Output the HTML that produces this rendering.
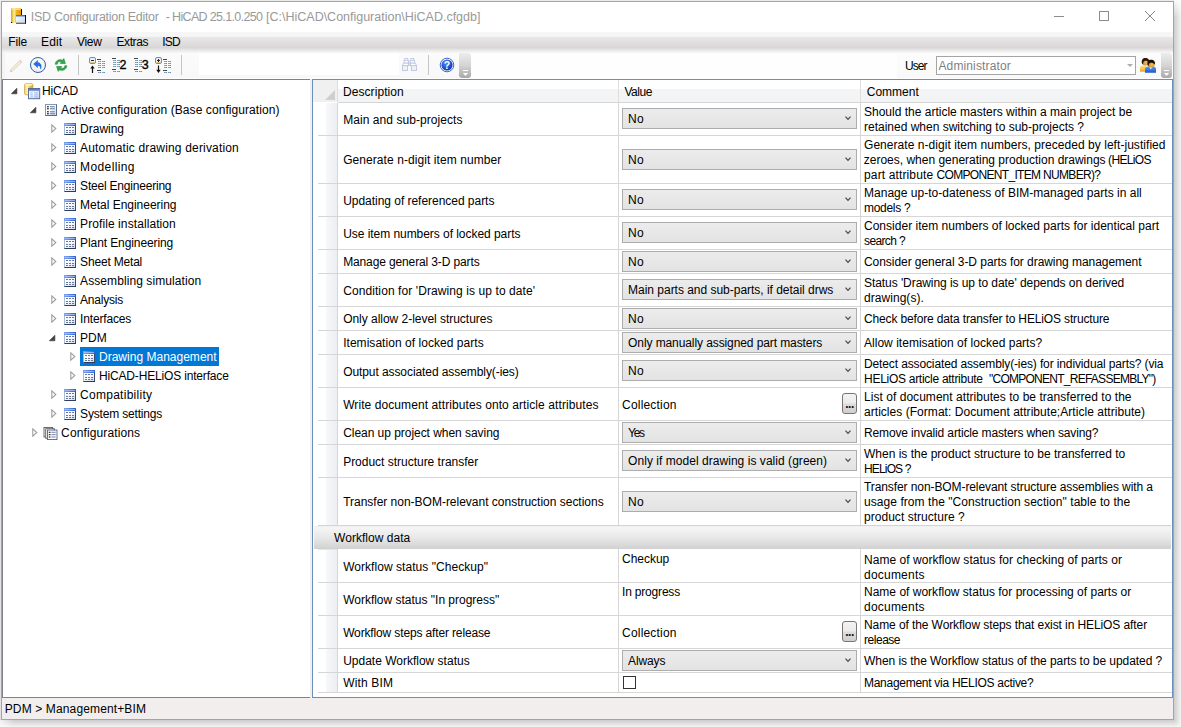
<!DOCTYPE html>
<html lang="en"><head><meta charset="utf-8"><title>ISD Configuration Editor</title>
<style>
*{box-sizing:border-box;margin:0;padding:0}
html,body{width:1181px;height:727px;overflow:hidden;background:#fff}
body{font:12px/15px "Liberation Sans",sans-serif;color:#000;position:relative}
.a,.t,svg{position:absolute}
.t{white-space:pre;line-height:15px;height:15px}
#win{left:1px;top:1px;width:1173px;height:719px;border:1px solid #a4a4a4;background:#f1f0ef}
.hl{position:absolute;height:1px;background:#d6d6d6}
.vl{position:absolute;width:1px;background:#d6d6d6}
.cb{position:absolute;left:622px;width:235px;height:21px;border:1px solid #adadad;background:linear-gradient(#ececec,#e3e3e3)}
.btn{position:absolute;left:842px;width:15px;height:21px;border:1px solid #767676;border-radius:3px;background:linear-gradient(#f3f3f3 0,#ebebeb 48%,#dddddd 52%,#cfcfcf 100%)}
</style></head><body>
<div class="a" style="left:0px;top:0px;width:1181px;height:1px;background:#ebebeb"></div>
<div class="a" style="left:0px;top:0px;width:1px;height:727px;background:linear-gradient(#ececec 0,#e4e4e4 30px,#e2e2e2 100%)"></div>
<div class="a" style="left:1174px;top:0px;width:7px;height:720px;background:linear-gradient(to right,#cdcdcd,#f3f3f3)"></div>
<div class="a" style="left:1174px;top:0px;width:7px;height:18px;background:linear-gradient(rgba(255,255,255,.85),rgba(255,255,255,0))"></div>
<div class="a" style="left:0px;top:720px;width:1174px;height:7px;background:linear-gradient(#cdcdcd,#f3f3f3)"></div>
<div class="a" style="left:0px;top:720px;width:14px;height:7px;background:linear-gradient(to right,rgba(255,255,255,.7),rgba(255,255,255,0))"></div>
<div class="a" style="left:1174px;top:720px;width:7px;height:7px;background:radial-gradient(circle at 0 0,#cdcdcd 0,#dedede 3px,#f3f3f3 7px)"></div>
<div id="win" class="a"></div>
<svg style="left:0;top:0" width="0" height="0"><defs><linearGradient id="thd" x1="0" x2="1" y1="0" y2="0"><stop offset="0" stop-color="#7ea4f0"/><stop offset="1" stop-color="#2a5fd8"/></linearGradient><linearGradient id="gy2" x1="0" x2="1" y1="0" y2="0"><stop offset="0" stop-color="#f2d468"/><stop offset=".35" stop-color="#fff2b0"/><stop offset=".7" stop-color="#efb830"/><stop offset="1" stop-color="#e6a21c"/></linearGradient><linearGradient id="thd2" x1="0" x2="0" y1="0" y2="1"><stop offset="0" stop-color="#3f6fd8"/><stop offset="1" stop-color="#9ab4ee"/></linearGradient><linearGradient id="tbg" x1="0" x2="1" y1="0" y2="1"><stop offset="0" stop-color="#fff"/><stop offset=".5" stop-color="#f4f7fd"/><stop offset="1" stop-color="#c4d1ee"/></linearGradient></defs></svg>
<div class="a" style="left:2px;top:2px;width:1171px;height:30px;background:#fff"></div>
<svg style="left:11px;top:8px" width="16" height="16" viewBox="0 0 16 16"><defs><linearGradient id="gy" x1="0" x2="1" y1="0" y2="0"><stop offset="0" stop-color="#e2a000"/><stop offset=".32" stop-color="#fdf0a0"/><stop offset=".55" stop-color="#efb41c"/><stop offset="1" stop-color="#e59c00"/></linearGradient>
<linearGradient id="gb" x1="0" x2="0" y1="0" y2="1"><stop offset="0" stop-color="#2a62d8"/><stop offset="1" stop-color="#5c8dea"/></linearGradient>
<linearGradient id="gw" x1="0" x2="1" y1="0" y2="1"><stop offset="0" stop-color="#fff"/><stop offset="1" stop-color="#c9d6f2"/></linearGradient></defs>
<rect x="0" y="0" width="10" height="14.8" fill="url(#gy)"/><rect x="0.3" y="0.3" width="9.4" height="1.5" fill="#f7e6a6"/>
<rect x="10" y="1" width="1" height="6" fill="#111"/><rect x="0" y="14" width="1.2" height="1" fill="#111"/>
<rect x="5" y="7" width="9" height="7.8" fill="url(#gw)"/><rect x="5" y="7" width="9" height="1.6" fill="url(#gb)"/>
<rect x="14" y="7" width="1" height="8.6" fill="#0a0a0a"/><rect x="5" y="14.8" width="10" height=".9" fill="#1c2a4a"/></svg>
<div class="t" style="left:30.85px;top:10px;letter-spacing:-0.291px;font-size:12.5px;color:#999;">ISD Configuration Editor</div>
<div class="t" style="left:165.69px;top:10px;letter-spacing:-0.653px;font-size:12.5px;color:#999;">- HiCAD 25.1.0.250</div>
<div class="t" style="left:266.11px;top:10px;letter-spacing:-0.011px;font-size:12.5px;color:#999;">[C:\HiCAD\Configuration\HiCAD.cfgdb]</div>
<div class="a" style="left:1054px;top:16px;width:10px;height:1px;background:#8c8c8c"></div>
<div class="a" style="left:1099px;top:11px;width:10px;height:10px;border:1px solid #8c8c8c"></div>
<svg style="left:1144px;top:10px" width="12" height="12" viewBox="0 0 12 12"><path d="M1 1 L11 11 M11 1 L1 11" stroke="#858585" stroke-width="1" fill="none"/></svg>
<div class="a" style="left:2px;top:32px;width:1171px;height:21px;background:linear-gradient(#f6f6f6 0,#f6f6f6 21%,#e9e8e8 24%,#d9d7d6 75%,#ececec 90%,#f8f8f8 100%)"></div>
<div class="t" style="left:8.32px;top:35px;letter-spacing:-0.175px;">File</div>
<div class="t" style="left:41.02px;top:35px;letter-spacing:0.128px;">Edit</div>
<div class="t" style="left:76.95px;top:35px;letter-spacing:-0.258px;">View</div>
<div class="t" style="left:116.52px;top:35px;letter-spacing:-0.420px;">Extras</div>
<div class="t" style="left:162.14px;top:35px;letter-spacing:-0.792px;">ISD</div>
<div class="a" style="left:2px;top:53px;width:1171px;height:26px;background:linear-gradient(to right,#f3f3f3 0,#f6f6f6 4px,#fefefe 5px)"></div>
<div class="a" style="left:5px;top:53px;width:456px;height:25px;background:linear-gradient(#fcfbfc,#f9f8f9);border-radius:3px 0 3px 0"></div>
<div class="a" style="left:459px;top:53px;width:12px;height:25px;background:linear-gradient(#ececec,#d4d4d4 50%,#a8a8a8);border-radius:0 3px 3px 3px"></div>
<div class="a" style="left:199px;top:53px;width:200px;height:22px;background:#fff"></div>
<div class="a" style="left:78px;top:55px;width:1px;height:20px;background:#c5c5c5"></div>
<div class="a" style="left:181px;top:55px;width:1px;height:20px;background:#c5c5c5"></div>
<div class="a" style="left:428px;top:55px;width:1px;height:20px;background:#c5c5c5"></div>
<svg style="left:8px;top:58px" width="16" height="16" viewBox="0 0 16 16"><path d="M2.2 13.8 L3.2 11 L12 2.2 L13.8 4 L5 12.8 Z" fill="#f3ead6" stroke="#d9d2c4" stroke-width=".8"/><path d="M11.3 2.9 L12.4 1.8 L14.2 3.6 L13.1 4.7Z" fill="#f4c9c9"/><path d="M2.2 13.8 L2.7 12.3 L3.7 13.3Z" fill="#bbb"/></svg>
<svg style="left:29px;top:56px" width="18" height="18" viewBox="0 0 18 18"><defs><radialGradient id="gu" cx=".5" cy=".3" r=".8"><stop offset="0" stop-color="#fff"/><stop offset="1" stop-color="#e9e9e4"/></radialGradient></defs><circle cx="9" cy="9" r="7.5" fill="url(#gu)" stroke="#335ea8" stroke-width="1"/><path d="M4.6 8 L8.6 4.4 L8.6 6.6 C11.8 6.8 13 9.6 11.6 13 C11.8 10.6 10.8 9.4 8.6 9.4 L8.6 11.6 Z" fill="#1f6fe8" stroke="#1a55c0" stroke-width=".5"/></svg>
<svg style="left:53px;top:57px" width="16" height="16" viewBox="0 0 16 16"><path d="M2.2 7.2 C2.4 3.6 6.2 1.6 9.6 3.2 L10.8 1.6 L12.4 6.6 L7.2 6.4 L8.4 4.8 C6.4 4 4.4 5 4.2 7.2 Z" fill="#2fa84a" stroke="#1f8a3a" stroke-width=".6"/><path d="M13.8 8.8 C13.6 12.4 9.8 14.4 6.4 12.8 L5.2 14.4 L3.6 9.4 L8.8 9.6 L7.6 11.2 C9.6 12 11.6 11 11.8 8.8 Z" fill="#2fa84a" stroke="#1f8a3a" stroke-width=".6"/></svg>
<svg style="left:89px;top:57px" width="18" height="18" viewBox="0 0 18 18"><rect x=".5" y=".5" width="6" height="6" rx="1.5" fill="#eaf1fb" stroke="#5b8fd6"/><rect x="2" y="3" width="3" height="1" fill="#222"/><rect x="1.6" y="5" width="3.8" height="1" fill="#e8c65a"/><path d="M3.5 16 L3.5 10" stroke="#111" stroke-width="1.2"/><path d="M1.3 11.6 L3.5 8.4 L5.7 11.6Z" fill="#111"/><rect x="8" y="2" width="4" height="1" fill="#444"/><rect x="9" y="4" width="1.5" height="1" fill="#8d8dd8"/><rect x="10.5" y="4" width="1.5" height="1" fill="#4f9d9d"/><rect x="13" y="4" width="1.5" height="1" fill="#8d8dd8"/><rect x="14.5" y="4" width="1.5" height="1" fill="#4f9d9d"/><rect x="9" y="6" width="1.5" height="1" fill="#8d8dd8"/><rect x="10.5" y="6" width="1.5" height="1" fill="#4f9d9d"/><rect x="13" y="6" width="1.5" height="1" fill="#8d8dd8"/><rect x="14.5" y="6" width="1.5" height="1" fill="#4f9d9d"/><rect x="9" y="8" width="1.5" height="1" fill="#8d8dd8"/><rect x="10.5" y="8" width="1.5" height="1" fill="#4f9d9d"/><rect x="13" y="8" width="1.5" height="1" fill="#8d8dd8"/><rect x="14.5" y="8" width="1.5" height="1" fill="#4f9d9d"/><rect x="9" y="10" width="1.5" height="1" fill="#8d8dd8"/><rect x="10.5" y="10" width="1.5" height="1" fill="#4f9d9d"/><rect x="13" y="10" width="1.5" height="1" fill="#8d8dd8"/><rect x="14.5" y="10" width="1.5" height="1" fill="#4f9d9d"/><rect x="8" y="13" width="4" height="1" fill="#444"/><rect x="9" y="15" width="1.5" height="1" fill="#8d8dd8"/><rect x="10.5" y="15" width="1.5" height="1" fill="#4f9d9d"/><rect x="13" y="15" width="1.5" height="1" fill="#8d8dd8"/><rect x="14.5" y="15" width="1.5" height="1" fill="#4f9d9d"/></svg>
<svg style="left:111px;top:56px" width="18" height="18" viewBox="0 0 18 18"><rect x="1" y="2" width="4" height="1" fill="#444"/><rect x="2" y="4" width="1.5" height="1" fill="#8d8dd8"/><rect x="3.5" y="4" width="1.5" height="1" fill="#4f9d9d"/><rect x="6" y="4" width="1.5" height="1" fill="#8d8dd8"/><rect x="7.5" y="4" width="1.5" height="1" fill="#4f9d9d"/><rect x="2" y="6" width="1.5" height="1" fill="#8d8dd8"/><rect x="3.5" y="6" width="1.5" height="1" fill="#4f9d9d"/><rect x="6" y="6" width="1.5" height="1" fill="#8d8dd8"/><rect x="7.5" y="6" width="1.5" height="1" fill="#4f9d9d"/><rect x="2" y="8" width="1.5" height="1" fill="#8d8dd8"/><rect x="3.5" y="8" width="1.5" height="1" fill="#4f9d9d"/><rect x="6" y="8" width="1.5" height="1" fill="#8d8dd8"/><rect x="7.5" y="8" width="1.5" height="1" fill="#4f9d9d"/><rect x="2" y="10" width="1.5" height="1" fill="#8d8dd8"/><rect x="3.5" y="10" width="1.5" height="1" fill="#4f9d9d"/><rect x="6" y="10" width="1.5" height="1" fill="#8d8dd8"/><rect x="7.5" y="10" width="1.5" height="1" fill="#4f9d9d"/><rect x="1" y="13" width="4" height="1" fill="#444"/><rect x="2" y="15" width="1.5" height="1" fill="#8d8dd8"/><rect x="3.5" y="15" width="1.5" height="1" fill="#4f9d9d"/><rect x="6" y="15" width="1.5" height="1" fill="#8d8dd8"/><rect x="7.5" y="15" width="1.5" height="1" fill="#4f9d9d"/></svg>
<div class="t" style="left:119.57px;top:58px;font-size:12.5px;-webkit-text-stroke:.35px #000;">2</div>
<svg style="left:133px;top:56px" width="18" height="18" viewBox="0 0 18 18"><rect x="1" y="2" width="4" height="1" fill="#444"/><rect x="2" y="4" width="1.5" height="1" fill="#8d8dd8"/><rect x="3.5" y="4" width="1.5" height="1" fill="#4f9d9d"/><rect x="6" y="4" width="1.5" height="1" fill="#8d8dd8"/><rect x="7.5" y="4" width="1.5" height="1" fill="#4f9d9d"/><rect x="2" y="6" width="1.5" height="1" fill="#8d8dd8"/><rect x="3.5" y="6" width="1.5" height="1" fill="#4f9d9d"/><rect x="6" y="6" width="1.5" height="1" fill="#8d8dd8"/><rect x="7.5" y="6" width="1.5" height="1" fill="#4f9d9d"/><rect x="2" y="8" width="1.5" height="1" fill="#8d8dd8"/><rect x="3.5" y="8" width="1.5" height="1" fill="#4f9d9d"/><rect x="6" y="8" width="1.5" height="1" fill="#8d8dd8"/><rect x="7.5" y="8" width="1.5" height="1" fill="#4f9d9d"/><rect x="2" y="10" width="1.5" height="1" fill="#8d8dd8"/><rect x="3.5" y="10" width="1.5" height="1" fill="#4f9d9d"/><rect x="6" y="10" width="1.5" height="1" fill="#8d8dd8"/><rect x="7.5" y="10" width="1.5" height="1" fill="#4f9d9d"/><rect x="1" y="13" width="4" height="1" fill="#444"/><rect x="2" y="15" width="1.5" height="1" fill="#8d8dd8"/><rect x="3.5" y="15" width="1.5" height="1" fill="#4f9d9d"/><rect x="6" y="15" width="1.5" height="1" fill="#8d8dd8"/><rect x="7.5" y="15" width="1.5" height="1" fill="#4f9d9d"/></svg>
<div class="t" style="left:141.72px;top:58px;font-size:12.5px;-webkit-text-stroke:.35px #000;">3</div>
<svg style="left:155px;top:57px" width="18" height="18" viewBox="0 0 18 18"><rect x=".5" y=".5" width="6" height="6" rx="1.5" fill="#eaf1fb" stroke="#5b8fd6"/><rect x="2" y="3" width="3" height="1" fill="#222"/><rect x="3" y="2" width="1" height="3" fill="#222"/><rect x="1.6" y="5" width="3.8" height="1" fill="#e8c65a"/><path d="M3.5 8.5 L3.5 14" stroke="#111" stroke-width="1.2"/><path d="M1.3 12.8 L3.5 16 L5.7 12.8Z" fill="#111"/><rect x="8" y="2" width="4" height="1" fill="#444"/><rect x="9" y="4" width="1.5" height="1" fill="#8d8dd8"/><rect x="10.5" y="4" width="1.5" height="1" fill="#4f9d9d"/><rect x="13" y="4" width="1.5" height="1" fill="#8d8dd8"/><rect x="14.5" y="4" width="1.5" height="1" fill="#4f9d9d"/><rect x="9" y="6" width="1.5" height="1" fill="#8d8dd8"/><rect x="10.5" y="6" width="1.5" height="1" fill="#4f9d9d"/><rect x="13" y="6" width="1.5" height="1" fill="#8d8dd8"/><rect x="14.5" y="6" width="1.5" height="1" fill="#4f9d9d"/><rect x="9" y="8" width="1.5" height="1" fill="#8d8dd8"/><rect x="10.5" y="8" width="1.5" height="1" fill="#4f9d9d"/><rect x="13" y="8" width="1.5" height="1" fill="#8d8dd8"/><rect x="14.5" y="8" width="1.5" height="1" fill="#4f9d9d"/><rect x="9" y="10" width="1.5" height="1" fill="#8d8dd8"/><rect x="10.5" y="10" width="1.5" height="1" fill="#4f9d9d"/><rect x="13" y="10" width="1.5" height="1" fill="#8d8dd8"/><rect x="14.5" y="10" width="1.5" height="1" fill="#4f9d9d"/><rect x="8" y="13" width="4" height="1" fill="#444"/><rect x="9" y="15" width="1.5" height="1" fill="#8d8dd8"/><rect x="10.5" y="15" width="1.5" height="1" fill="#4f9d9d"/><rect x="13" y="15" width="1.5" height="1" fill="#8d8dd8"/><rect x="14.5" y="15" width="1.5" height="1" fill="#4f9d9d"/></svg>
<svg style="left:402px;top:58px" width="15" height="13" viewBox="0 0 15 13"><g fill="#fff" stroke="#c2c9e2" stroke-width="1"><rect x="2.8" y=".5" width="3" height="2.6"/><rect x="8.8" y=".5" width="3" height="2.6"/><rect x="2" y="2.6" width="4.6" height="2.6"/><rect x="8" y="2.6" width="4.6" height="2.6"/><path d="M1.4 5.2 H6.8 V7.6 H.6 Z"/><path d="M8 5.2 H13.4 L14.4 7.6 H8 Z"/><rect x=".5" y="7.6" width="5" height="4.9" fill="#eef1f8"/><rect x="9.5" y="7.6" width="5" height="4.9" fill="#eef1f8"/><rect x="6.4" y="5" width="2" height="2.4" fill="#dfe4f1"/></g></svg>
<svg style="left:439px;top:57px" width="16" height="16" viewBox="0 0 16 16"><defs><radialGradient id="gh" cx=".4" cy=".3" r=".8"><stop offset="0" stop-color="#5b8cf0"/><stop offset=".6" stop-color="#1c4fd0"/><stop offset="1" stop-color="#0a2f9a"/></radialGradient></defs><circle cx="8" cy="8" r="6.8" fill="#fff" stroke="#2a55c8" stroke-width=".9"/><circle cx="8" cy="8" r="5.6" fill="url(#gh)"/><text x="8" y="12" text-anchor="middle" font-family="Liberation Sans, sans-serif" font-weight="bold" font-size="10.5" fill="#fff">?</text></svg>
<svg style="left:462px;top:70px" width="8" height="8" viewBox="0 0 8 8"><rect x="1" y="0" width="5" height="1" fill="#fff"/><path d="M1 3 h5 l-2.5 3z" fill="#fff"/></svg>
<div class="a" style="left:897px;top:53px;width:266px;height:25px;background:linear-gradient(#fcfcfc,#f9f9f9);border-radius:4px 0 3px 0"></div>
<div class="a" style="left:1161px;top:53px;width:11px;height:25px;background:linear-gradient(#ececec,#d4d4d4 50%,#a8a8a8);border-radius:0 3px 3px 3px"></div>
<svg style="left:1163px;top:70px" width="8" height="8" viewBox="0 0 8 8"><rect x="1" y="0" width="5" height="1" fill="#fff"/><path d="M1 3 h5 l-2.5 3z" fill="#fff"/></svg>
<div class="t" style="left:905.07px;top:59px;letter-spacing:-0.990px;">User</div>
<div class="a" style="left:936px;top:56px;width:200px;height:19px;border:1px solid #a5a5a5;background:#fff"></div>
<div class="t" style="left:938.48px;top:59px;letter-spacing:0.128px;color:#7f7f7f;">Administrator</div>
<svg style="left:1126.5px;top:63.8px" width="6" height="3" viewBox="0 0 6 3"><path d="M0 0h6l-3 3z" fill="#acacac"/></svg>
<svg style="left:1139px;top:57px" width="18" height="17" viewBox="0 0 18 17"><defs><linearGradient id="ub" x1="0" x2="0" y1="0" y2="1"><stop offset="0" stop-color="#5a9cf6"/><stop offset="1" stop-color="#1a55c6"/></linearGradient><linearGradient id="uy" x1="0" x2="0" y1="0" y2="1"><stop offset="0" stop-color="#fbe08a"/><stop offset="1" stop-color="#e9a822"/></linearGradient><radialGradient id="uf" cx=".6" cy=".6" r=".7"><stop offset="0" stop-color="#f2be50"/><stop offset="1" stop-color="#c07a22"/></radialGradient></defs><path d="M1 14.8 V11 C1 9.4 2.2 8.6 3.6 8.6 H7 V14.8Z" fill="url(#uy)"/><circle cx="6.6" cy="5" r="3.5" fill="url(#uf)"/><path d="M3 6.6 C1.8 2.2 4.6 .4 7.4 1 C10 1.6 10.6 3.8 10 5.4 C8.6 3.8 6.4 3.4 5.2 4.2 C4.4 4.8 4 6 4.2 7.4 Z" fill="#2a1608"/><path d="M6 15.8 V12.2 C6 10.4 7.4 9.6 9 9.6 H14.2 C15.8 9.6 17 10.4 17 12.2 V15.8Z" fill="url(#ub)"/><path d="M10.2 9.6 L11.8 12.4 L13.4 9.6Z" fill="#fff"/><circle cx="12.2" cy="6.9" r="3.6" fill="url(#uf)"/><path d="M8.7 8.2 C7.6 3.8 10.4 2.2 13.2 2.8 C15.8 3.4 16.4 5.8 15.8 7.4 C14.4 5.8 12.2 5.2 10.8 6 C10 6.6 9.6 7.6 9.8 9 Z" fill="#1c0f06"/></svg>
<div class="a" style="left:2px;top:79px;width:308px;height:619px;background:#fff;border:1px solid #7f8389;border-right:0"></div>
<svg style="left:10px;top:87px" width="8" height="8" viewBox="0 0 8 8"><path d="M6.9 1.2 V6.8 H1.3Z" fill="#454545" stroke="#262626" stroke-width=".5" stroke-linejoin="round"/></svg>
<svg style="left:24px;top:83px" width="17" height="17" viewBox="0 0 17 17"><rect x=".5" y=".6" width="8.4" height="11.2" rx="1.6" fill="url(#gy2)" stroke="#c9a040" stroke-width=".7"/><ellipse cx="4.7" cy="1.7" rx="3.7" ry="1" fill="#fdf4c4"/><rect x="4.5" y="5.5" width="11.2" height="10.2" fill="url(#tbg)" stroke="#5a6e94"/><rect x="5" y="6" width="10.2" height="2.2" fill="url(#thd2)"/><g fill="#9db8f0"><rect x="6.2" y="9.4" width="2.6" height="1"/><rect x="10" y="9.4" width="4" height="1"/><rect x="6.2" y="11.4" width="2.6" height="1"/><rect x="10" y="11.4" width="4" height="1"/><rect x="6.2" y="13.4" width="2.6" height="1"/><rect x="10" y="13.4" width="4" height="1"/></g></svg>
<div class="t" style="left:41.90px;top:84px;letter-spacing:-0.124px;">HiCAD</div>
<svg style="left:29px;top:106px" width="8" height="8" viewBox="0 0 8 8"><path d="M6.9 1.2 V6.8 H1.3Z" fill="#454545" stroke="#262626" stroke-width=".5" stroke-linejoin="round"/></svg>
<svg style="left:45px;top:104px" width="12" height="12" viewBox="0 0 12 12"><rect x=".5" y=".5" width="11" height="11" fill="url(#tbg)" stroke="#566b93"/><path d="M.5 11.5V.5H11.5" fill="none" stroke="#8797b8"/><g fill="#1a1a1a"><rect x="2" y="2.2" width="1.8" height="1.1"/><rect x="2" y="4.2" width="1.8" height="1.1"/><rect x="2" y="7.2" width="1.8" height="1.1"/><rect x="2" y="9.2" width="1.8" height="1.1"/></g><g fill="#76859f"><rect x="5" y="2.2" width="4.8" height="1.1"/><rect x="5" y="4.2" width="4.8" height="1.1"/><rect x="5" y="7.2" width="4.8" height="1.1"/><rect x="5" y="9.2" width="4.8" height="1.1"/></g></svg>
<div class="t" style="left:61.10px;top:103px;letter-spacing:0.074px;">Active configuration (Base configuration)</div>
<svg style="left:51px;top:124px" width="6" height="9" viewBox="0 0 6 9"><path d="M.8 .8 L4.8 4.5 L.8 8.2Z" fill="#fff" stroke="#9e9e9e" stroke-width="1.1"/></svg>
<svg style="left:64px;top:123px" width="12" height="12" viewBox="0 0 12 12"><rect x="0" y="3" width="12" height="9" fill="url(#tbg)"/><rect x="0" y="0" width="12" height="3" fill="url(#thd)"/><rect x="1" y="1" width="10" height="1" fill="#b4cbf8" opacity=".75"/><rect x="0" y="3" width="1" height="9" fill="#a9b9d8"/><rect x="11" y="3" width="1" height="9" fill="#364a6c"/><rect x=".5" y="11" width="11.5" height="1" fill="#2c3e5e"/><g fill="#687792"><rect x="2" y="4" width="2" height="1"/><rect x="5" y="4" width="2" height="1"/><rect x="8" y="4" width="2" height="1"/><rect x="2" y="7" width="2" height="1"/><rect x="5" y="7" width="2" height="1"/><rect x="8" y="7" width="2" height="1"/><rect x="2" y="9" width="2" height="1"/><rect x="5" y="9" width="2" height="1"/><rect x="8" y="9" width="2" height="1"/></g></svg>
<div class="t" style="left:80.10px;top:122px;letter-spacing:-0.015px;">Drawing</div>
<svg style="left:51px;top:143px" width="6" height="9" viewBox="0 0 6 9"><path d="M.8 .8 L4.8 4.5 L.8 8.2Z" fill="#fff" stroke="#9e9e9e" stroke-width="1.1"/></svg>
<svg style="left:64px;top:142px" width="12" height="12" viewBox="0 0 12 12"><rect x="0" y="3" width="12" height="9" fill="url(#tbg)"/><rect x="0" y="0" width="12" height="3" fill="url(#thd)"/><rect x="1" y="1" width="10" height="1" fill="#b4cbf8" opacity=".75"/><rect x="0" y="3" width="1" height="9" fill="#a9b9d8"/><rect x="11" y="3" width="1" height="9" fill="#364a6c"/><rect x=".5" y="11" width="11.5" height="1" fill="#2c3e5e"/><g fill="#687792"><rect x="2" y="4" width="2" height="1"/><rect x="5" y="4" width="2" height="1"/><rect x="8" y="4" width="2" height="1"/><rect x="2" y="7" width="2" height="1"/><rect x="5" y="7" width="2" height="1"/><rect x="8" y="7" width="2" height="1"/><rect x="2" y="9" width="2" height="1"/><rect x="5" y="9" width="2" height="1"/><rect x="8" y="9" width="2" height="1"/></g></svg>
<div class="t" style="left:80.10px;top:141px;letter-spacing:0.170px;">Automatic drawing derivation</div>
<svg style="left:51px;top:162px" width="6" height="9" viewBox="0 0 6 9"><path d="M.8 .8 L4.8 4.5 L.8 8.2Z" fill="#fff" stroke="#9e9e9e" stroke-width="1.1"/></svg>
<svg style="left:64px;top:161px" width="12" height="12" viewBox="0 0 12 12"><rect x="0" y="3" width="12" height="9" fill="url(#tbg)"/><rect x="0" y="0" width="12" height="3" fill="url(#thd)"/><rect x="1" y="1" width="10" height="1" fill="#b4cbf8" opacity=".75"/><rect x="0" y="3" width="1" height="9" fill="#a9b9d8"/><rect x="11" y="3" width="1" height="9" fill="#364a6c"/><rect x=".5" y="11" width="11.5" height="1" fill="#2c3e5e"/><g fill="#687792"><rect x="2" y="4" width="2" height="1"/><rect x="5" y="4" width="2" height="1"/><rect x="8" y="4" width="2" height="1"/><rect x="2" y="7" width="2" height="1"/><rect x="5" y="7" width="2" height="1"/><rect x="8" y="7" width="2" height="1"/><rect x="2" y="9" width="2" height="1"/><rect x="5" y="9" width="2" height="1"/><rect x="8" y="9" width="2" height="1"/></g></svg>
<div class="t" style="left:80.10px;top:160px;letter-spacing:0.381px;">Modelling</div>
<svg style="left:51px;top:181px" width="6" height="9" viewBox="0 0 6 9"><path d="M.8 .8 L4.8 4.5 L.8 8.2Z" fill="#fff" stroke="#9e9e9e" stroke-width="1.1"/></svg>
<svg style="left:64px;top:180px" width="12" height="12" viewBox="0 0 12 12"><rect x="0" y="3" width="12" height="9" fill="url(#tbg)"/><rect x="0" y="0" width="12" height="3" fill="url(#thd)"/><rect x="1" y="1" width="10" height="1" fill="#b4cbf8" opacity=".75"/><rect x="0" y="3" width="1" height="9" fill="#a9b9d8"/><rect x="11" y="3" width="1" height="9" fill="#364a6c"/><rect x=".5" y="11" width="11.5" height="1" fill="#2c3e5e"/><g fill="#687792"><rect x="2" y="4" width="2" height="1"/><rect x="5" y="4" width="2" height="1"/><rect x="8" y="4" width="2" height="1"/><rect x="2" y="7" width="2" height="1"/><rect x="5" y="7" width="2" height="1"/><rect x="8" y="7" width="2" height="1"/><rect x="2" y="9" width="2" height="1"/><rect x="5" y="9" width="2" height="1"/><rect x="8" y="9" width="2" height="1"/></g></svg>
<div class="t" style="left:80.10px;top:179px;letter-spacing:-0.207px;">Steel Engineering</div>
<svg style="left:51px;top:200px" width="6" height="9" viewBox="0 0 6 9"><path d="M.8 .8 L4.8 4.5 L.8 8.2Z" fill="#fff" stroke="#9e9e9e" stroke-width="1.1"/></svg>
<svg style="left:64px;top:199px" width="12" height="12" viewBox="0 0 12 12"><rect x="0" y="3" width="12" height="9" fill="url(#tbg)"/><rect x="0" y="0" width="12" height="3" fill="url(#thd)"/><rect x="1" y="1" width="10" height="1" fill="#b4cbf8" opacity=".75"/><rect x="0" y="3" width="1" height="9" fill="#a9b9d8"/><rect x="11" y="3" width="1" height="9" fill="#364a6c"/><rect x=".5" y="11" width="11.5" height="1" fill="#2c3e5e"/><g fill="#687792"><rect x="2" y="4" width="2" height="1"/><rect x="5" y="4" width="2" height="1"/><rect x="8" y="4" width="2" height="1"/><rect x="2" y="7" width="2" height="1"/><rect x="5" y="7" width="2" height="1"/><rect x="8" y="7" width="2" height="1"/><rect x="2" y="9" width="2" height="1"/><rect x="5" y="9" width="2" height="1"/><rect x="8" y="9" width="2" height="1"/></g></svg>
<div class="t" style="left:80.10px;top:198px;letter-spacing:-0.019px;">Metal Engineering</div>
<svg style="left:51px;top:219px" width="6" height="9" viewBox="0 0 6 9"><path d="M.8 .8 L4.8 4.5 L.8 8.2Z" fill="#fff" stroke="#9e9e9e" stroke-width="1.1"/></svg>
<svg style="left:64px;top:218px" width="12" height="12" viewBox="0 0 12 12"><rect x="0" y="3" width="12" height="9" fill="url(#tbg)"/><rect x="0" y="0" width="12" height="3" fill="url(#thd)"/><rect x="1" y="1" width="10" height="1" fill="#b4cbf8" opacity=".75"/><rect x="0" y="3" width="1" height="9" fill="#a9b9d8"/><rect x="11" y="3" width="1" height="9" fill="#364a6c"/><rect x=".5" y="11" width="11.5" height="1" fill="#2c3e5e"/><g fill="#687792"><rect x="2" y="4" width="2" height="1"/><rect x="5" y="4" width="2" height="1"/><rect x="8" y="4" width="2" height="1"/><rect x="2" y="7" width="2" height="1"/><rect x="5" y="7" width="2" height="1"/><rect x="8" y="7" width="2" height="1"/><rect x="2" y="9" width="2" height="1"/><rect x="5" y="9" width="2" height="1"/><rect x="8" y="9" width="2" height="1"/></g></svg>
<div class="t" style="left:80.10px;top:217px;letter-spacing:0.085px;">Profile installation</div>
<svg style="left:51px;top:238px" width="6" height="9" viewBox="0 0 6 9"><path d="M.8 .8 L4.8 4.5 L.8 8.2Z" fill="#fff" stroke="#9e9e9e" stroke-width="1.1"/></svg>
<svg style="left:64px;top:237px" width="12" height="12" viewBox="0 0 12 12"><rect x="0" y="3" width="12" height="9" fill="url(#tbg)"/><rect x="0" y="0" width="12" height="3" fill="url(#thd)"/><rect x="1" y="1" width="10" height="1" fill="#b4cbf8" opacity=".75"/><rect x="0" y="3" width="1" height="9" fill="#a9b9d8"/><rect x="11" y="3" width="1" height="9" fill="#364a6c"/><rect x=".5" y="11" width="11.5" height="1" fill="#2c3e5e"/><g fill="#687792"><rect x="2" y="4" width="2" height="1"/><rect x="5" y="4" width="2" height="1"/><rect x="8" y="4" width="2" height="1"/><rect x="2" y="7" width="2" height="1"/><rect x="5" y="7" width="2" height="1"/><rect x="8" y="7" width="2" height="1"/><rect x="2" y="9" width="2" height="1"/><rect x="5" y="9" width="2" height="1"/><rect x="8" y="9" width="2" height="1"/></g></svg>
<div class="t" style="left:80.10px;top:236px;letter-spacing:-0.098px;">Plant Engineering</div>
<svg style="left:51px;top:257px" width="6" height="9" viewBox="0 0 6 9"><path d="M.8 .8 L4.8 4.5 L.8 8.2Z" fill="#fff" stroke="#9e9e9e" stroke-width="1.1"/></svg>
<svg style="left:64px;top:256px" width="12" height="12" viewBox="0 0 12 12"><rect x="0" y="3" width="12" height="9" fill="url(#tbg)"/><rect x="0" y="0" width="12" height="3" fill="url(#thd)"/><rect x="1" y="1" width="10" height="1" fill="#b4cbf8" opacity=".75"/><rect x="0" y="3" width="1" height="9" fill="#a9b9d8"/><rect x="11" y="3" width="1" height="9" fill="#364a6c"/><rect x=".5" y="11" width="11.5" height="1" fill="#2c3e5e"/><g fill="#687792"><rect x="2" y="4" width="2" height="1"/><rect x="5" y="4" width="2" height="1"/><rect x="8" y="4" width="2" height="1"/><rect x="2" y="7" width="2" height="1"/><rect x="5" y="7" width="2" height="1"/><rect x="8" y="7" width="2" height="1"/><rect x="2" y="9" width="2" height="1"/><rect x="5" y="9" width="2" height="1"/><rect x="8" y="9" width="2" height="1"/></g></svg>
<div class="t" style="left:80.10px;top:255px;letter-spacing:-0.184px;">Sheet Metal</div>
<svg style="left:64px;top:275px" width="12" height="12" viewBox="0 0 12 12"><rect x="0" y="3" width="12" height="9" fill="url(#tbg)"/><rect x="0" y="0" width="12" height="3" fill="url(#thd)"/><rect x="1" y="1" width="10" height="1" fill="#b4cbf8" opacity=".75"/><rect x="0" y="3" width="1" height="9" fill="#a9b9d8"/><rect x="11" y="3" width="1" height="9" fill="#364a6c"/><rect x=".5" y="11" width="11.5" height="1" fill="#2c3e5e"/><g fill="#687792"><rect x="2" y="4" width="2" height="1"/><rect x="5" y="4" width="2" height="1"/><rect x="8" y="4" width="2" height="1"/><rect x="2" y="7" width="2" height="1"/><rect x="5" y="7" width="2" height="1"/><rect x="8" y="7" width="2" height="1"/><rect x="2" y="9" width="2" height="1"/><rect x="5" y="9" width="2" height="1"/><rect x="8" y="9" width="2" height="1"/></g></svg>
<div class="t" style="left:80.10px;top:274px;letter-spacing:0.079px;">Assembling simulation</div>
<svg style="left:51px;top:295px" width="6" height="9" viewBox="0 0 6 9"><path d="M.8 .8 L4.8 4.5 L.8 8.2Z" fill="#fff" stroke="#9e9e9e" stroke-width="1.1"/></svg>
<svg style="left:64px;top:294px" width="12" height="12" viewBox="0 0 12 12"><rect x="0" y="3" width="12" height="9" fill="url(#tbg)"/><rect x="0" y="0" width="12" height="3" fill="url(#thd)"/><rect x="1" y="1" width="10" height="1" fill="#b4cbf8" opacity=".75"/><rect x="0" y="3" width="1" height="9" fill="#a9b9d8"/><rect x="11" y="3" width="1" height="9" fill="#364a6c"/><rect x=".5" y="11" width="11.5" height="1" fill="#2c3e5e"/><g fill="#687792"><rect x="2" y="4" width="2" height="1"/><rect x="5" y="4" width="2" height="1"/><rect x="8" y="4" width="2" height="1"/><rect x="2" y="7" width="2" height="1"/><rect x="5" y="7" width="2" height="1"/><rect x="8" y="7" width="2" height="1"/><rect x="2" y="9" width="2" height="1"/><rect x="5" y="9" width="2" height="1"/><rect x="8" y="9" width="2" height="1"/></g></svg>
<div class="t" style="left:80.10px;top:293px;letter-spacing:-0.236px;">Analysis</div>
<svg style="left:51px;top:314px" width="6" height="9" viewBox="0 0 6 9"><path d="M.8 .8 L4.8 4.5 L.8 8.2Z" fill="#fff" stroke="#9e9e9e" stroke-width="1.1"/></svg>
<svg style="left:64px;top:313px" width="12" height="12" viewBox="0 0 12 12"><rect x="0" y="3" width="12" height="9" fill="url(#tbg)"/><rect x="0" y="0" width="12" height="3" fill="url(#thd)"/><rect x="1" y="1" width="10" height="1" fill="#b4cbf8" opacity=".75"/><rect x="0" y="3" width="1" height="9" fill="#a9b9d8"/><rect x="11" y="3" width="1" height="9" fill="#364a6c"/><rect x=".5" y="11" width="11.5" height="1" fill="#2c3e5e"/><g fill="#687792"><rect x="2" y="4" width="2" height="1"/><rect x="5" y="4" width="2" height="1"/><rect x="8" y="4" width="2" height="1"/><rect x="2" y="7" width="2" height="1"/><rect x="5" y="7" width="2" height="1"/><rect x="8" y="7" width="2" height="1"/><rect x="2" y="9" width="2" height="1"/><rect x="5" y="9" width="2" height="1"/><rect x="8" y="9" width="2" height="1"/></g></svg>
<div class="t" style="left:80.10px;top:312px;letter-spacing:-0.174px;">Interfaces</div>
<svg style="left:48px;top:334px" width="8" height="8" viewBox="0 0 8 8"><path d="M6.9 1.2 V6.8 H1.3Z" fill="#454545" stroke="#262626" stroke-width=".5" stroke-linejoin="round"/></svg>
<svg style="left:64px;top:332px" width="12" height="12" viewBox="0 0 12 12"><rect x="0" y="3" width="12" height="9" fill="url(#tbg)"/><rect x="0" y="0" width="12" height="3" fill="url(#thd)"/><rect x="1" y="1" width="10" height="1" fill="#b4cbf8" opacity=".75"/><rect x="0" y="3" width="1" height="9" fill="#a9b9d8"/><rect x="11" y="3" width="1" height="9" fill="#364a6c"/><rect x=".5" y="11" width="11.5" height="1" fill="#2c3e5e"/><g fill="#687792"><rect x="2" y="4" width="2" height="1"/><rect x="5" y="4" width="2" height="1"/><rect x="8" y="4" width="2" height="1"/><rect x="2" y="7" width="2" height="1"/><rect x="5" y="7" width="2" height="1"/><rect x="8" y="7" width="2" height="1"/><rect x="2" y="9" width="2" height="1"/><rect x="5" y="9" width="2" height="1"/><rect x="8" y="9" width="2" height="1"/></g></svg>
<div class="t" style="left:80.10px;top:331px;letter-spacing:-0.044px;">PDM</div>
<div class="a" style="left:80px;top:347px;width:139px;height:19px;background:#0078d7"></div>
<svg style="left:70px;top:352px" width="6" height="9" viewBox="0 0 6 9"><path d="M.8 .8 L4.8 4.5 L.8 8.2Z" fill="#fff" stroke="#9e9e9e" stroke-width="1.1"/></svg>
<svg style="left:83px;top:351px" width="12" height="12" viewBox="0 0 12 12"><rect x="0" y="3" width="12" height="9" fill="url(#tbg)"/><rect x="0" y="0" width="12" height="3" fill="url(#thd)"/><rect x="1" y="1" width="10" height="1" fill="#b4cbf8" opacity=".75"/><rect x="0" y="3" width="1" height="9" fill="#a9b9d8"/><rect x="11" y="3" width="1" height="9" fill="#364a6c"/><rect x=".5" y="11" width="11.5" height="1" fill="#2c3e5e"/><g fill="#687792"><rect x="2" y="4" width="2" height="1"/><rect x="5" y="4" width="2" height="1"/><rect x="8" y="4" width="2" height="1"/><rect x="2" y="7" width="2" height="1"/><rect x="5" y="7" width="2" height="1"/><rect x="8" y="7" width="2" height="1"/><rect x="2" y="9" width="2" height="1"/><rect x="5" y="9" width="2" height="1"/><rect x="8" y="9" width="2" height="1"/></g></svg>
<div class="t" style="left:99.00px;top:350px;letter-spacing:0.011px;color:#fff;">Drawing Management</div>
<svg style="left:70px;top:371px" width="6" height="9" viewBox="0 0 6 9"><path d="M.8 .8 L4.8 4.5 L.8 8.2Z" fill="#fff" stroke="#9e9e9e" stroke-width="1.1"/></svg>
<svg style="left:83px;top:370px" width="12" height="12" viewBox="0 0 12 12"><rect x="0" y="3" width="12" height="9" fill="url(#tbg)"/><rect x="0" y="0" width="12" height="3" fill="url(#thd)"/><rect x="1" y="1" width="10" height="1" fill="#b4cbf8" opacity=".75"/><rect x="0" y="3" width="1" height="9" fill="#a9b9d8"/><rect x="11" y="3" width="1" height="9" fill="#364a6c"/><rect x=".5" y="11" width="11.5" height="1" fill="#2c3e5e"/><g fill="#687792"><rect x="2" y="4" width="2" height="1"/><rect x="5" y="4" width="2" height="1"/><rect x="8" y="4" width="2" height="1"/><rect x="2" y="7" width="2" height="1"/><rect x="5" y="7" width="2" height="1"/><rect x="8" y="7" width="2" height="1"/><rect x="2" y="9" width="2" height="1"/><rect x="5" y="9" width="2" height="1"/><rect x="8" y="9" width="2" height="1"/></g></svg>
<div class="t" style="left:99.00px;top:369px;letter-spacing:-0.169px;">HiCAD-HELiOS interface</div>
<svg style="left:51px;top:390px" width="6" height="9" viewBox="0 0 6 9"><path d="M.8 .8 L4.8 4.5 L.8 8.2Z" fill="#fff" stroke="#9e9e9e" stroke-width="1.1"/></svg>
<svg style="left:64px;top:389px" width="12" height="12" viewBox="0 0 12 12"><rect x="0" y="3" width="12" height="9" fill="url(#tbg)"/><rect x="0" y="0" width="12" height="3" fill="url(#thd)"/><rect x="1" y="1" width="10" height="1" fill="#b4cbf8" opacity=".75"/><rect x="0" y="3" width="1" height="9" fill="#a9b9d8"/><rect x="11" y="3" width="1" height="9" fill="#364a6c"/><rect x=".5" y="11" width="11.5" height="1" fill="#2c3e5e"/><g fill="#687792"><rect x="2" y="4" width="2" height="1"/><rect x="5" y="4" width="2" height="1"/><rect x="8" y="4" width="2" height="1"/><rect x="2" y="7" width="2" height="1"/><rect x="5" y="7" width="2" height="1"/><rect x="8" y="7" width="2" height="1"/><rect x="2" y="9" width="2" height="1"/><rect x="5" y="9" width="2" height="1"/><rect x="8" y="9" width="2" height="1"/></g></svg>
<div class="t" style="left:80.10px;top:388px;letter-spacing:0.268px;">Compatibility</div>
<svg style="left:51px;top:409px" width="6" height="9" viewBox="0 0 6 9"><path d="M.8 .8 L4.8 4.5 L.8 8.2Z" fill="#fff" stroke="#9e9e9e" stroke-width="1.1"/></svg>
<svg style="left:64px;top:408px" width="12" height="12" viewBox="0 0 12 12"><rect x="0" y="3" width="12" height="9" fill="url(#tbg)"/><rect x="0" y="0" width="12" height="3" fill="url(#thd)"/><rect x="1" y="1" width="10" height="1" fill="#b4cbf8" opacity=".75"/><rect x="0" y="3" width="1" height="9" fill="#a9b9d8"/><rect x="11" y="3" width="1" height="9" fill="#364a6c"/><rect x=".5" y="11" width="11.5" height="1" fill="#2c3e5e"/><g fill="#687792"><rect x="2" y="4" width="2" height="1"/><rect x="5" y="4" width="2" height="1"/><rect x="8" y="4" width="2" height="1"/><rect x="2" y="7" width="2" height="1"/><rect x="5" y="7" width="2" height="1"/><rect x="8" y="7" width="2" height="1"/><rect x="2" y="9" width="2" height="1"/><rect x="5" y="9" width="2" height="1"/><rect x="8" y="9" width="2" height="1"/></g></svg>
<div class="t" style="left:80.10px;top:407px;letter-spacing:-0.176px;">System settings</div>
<svg style="left:32px;top:428px" width="6" height="9" viewBox="0 0 6 9"><path d="M.8 .8 L4.8 4.5 L.8 8.2Z" fill="#fff" stroke="#9e9e9e" stroke-width="1.1"/></svg>
<svg style="left:43px;top:427px" width="15" height="13" viewBox="0 0 16 15"><rect x=".5" y=".5" width="10" height="11" fill="#fff" stroke="#555"/><rect x="2.5" y="2" width="10" height="11" fill="#fff" stroke="#555"/><rect x="4.5" y="3.5" width="11" height="11" fill="#fbfcff" stroke="#4a5f8c"/><g fill="#222"><rect x="6" y="5.5" width="2" height="1.3"/><rect x="6" y="8.2" width="2" height="1.3"/><rect x="6" y="10.9" width="2" height="1.3"/></g><g fill="#7c8db0"><rect x="9" y="5.5" width="5" height="1.2"/><rect x="9" y="8.2" width="5" height="1.2"/><rect x="9" y="10.9" width="5" height="1.2"/></g></svg>
<div class="t" style="left:61.10px;top:426px;letter-spacing:0.126px;">Configurations</div>
<div class="a" style="left:312px;top:79px;width:861px;height:619px;background:#fff;border:1px solid #6890bb"></div>
<div class="a" style="left:313px;top:80px;width:859px;height:22px;background:linear-gradient(#fff 9px,#f3f4f6 9px)"></div>
<div class="a" style="left:313px;top:80px;width:25px;height:22px;background:#f0f0f0"></div>
<svg style="left:325px;top:90px" width="10" height="10" viewBox="0 0 10 10"><path d="M10 0V10H0Z" fill="#cfcfcf"/></svg>
<div class="a" style="left:338px;top:102px;width:834px;height:1px;background:#d5d5d5"></div>
<div class="t" style="left:342.92px;top:85px;letter-spacing:0.083px;">Description</div>
<div class="t" style="left:624.45px;top:85px;letter-spacing:-0.432px;">Value</div>
<div class="t" style="left:866.79px;top:85px;">Comment</div>
<div class="a" style="left:337px;top:80px;width:1px;height:22px;background:#dedede"></div>
<div class="a" style="left:618px;top:80px;width:1px;height:22px;background:#dedede"></div>
<div class="a" style="left:860px;top:80px;width:1px;height:22px;background:#dedede"></div>
<div class="a" style="left:326px;top:103px;width:11px;height:422px;background:linear-gradient(to right,#f7f8fa,#eceef2)"></div>
<div class="vl" style="left:337px;top:103px;width:1px;height:422px;"></div>
<div class="vl" style="left:618px;top:103px;width:1px;height:422px;"></div>
<div class="vl" style="left:860px;top:103px;width:1px;height:422px;"></div>
<div class="a" style="left:326px;top:549px;width:11px;height:143px;background:linear-gradient(to right,#f7f8fa,#eceef2)"></div>
<div class="vl" style="left:337px;top:549px;width:1px;height:143px;"></div>
<div class="vl" style="left:618px;top:549px;width:1px;height:143px;"></div>
<div class="vl" style="left:860px;top:549px;width:1px;height:143px;"></div>
<div class="hl" style="left:318px;top:135px;width:854px;height:1px;"></div>
<div class="t" style="left:343.15px;top:113px;letter-spacing:0.061px;">Main and sub-projects</div>
<div class="cb" style="left:622px;top:108px;width:235px;height:21px;"></div>
<div class="t" style="left:628.10px;top:112px;letter-spacing:0.310px;">No</div>
<svg style="left:845px;top:115.6px" width="6" height="5" viewBox="0 0 6 5"><path d="M.5 .6 L3 3.4 L5.5 .6" fill="none" stroke="#4a4a4a" stroke-width="1.25"/></svg>
<div class="t" style="left:864.00px;top:105px;">Should the article masters within a main project be</div>
<div class="t" style="left:864.00px;top:120px;letter-spacing:-0.004px;">retained when switching to sub-projects ?</div>
<div class="hl" style="left:318px;top:183px;width:854px;height:1px;"></div>
<div class="t" style="left:343.15px;top:153px;letter-spacing:0.073px;">Generate n-digit item number</div>
<div class="cb" style="left:622px;top:149px;width:235px;height:21px;"></div>
<div class="t" style="left:628.10px;top:153px;letter-spacing:0.310px;">No</div>
<svg style="left:845px;top:156.6px" width="6" height="5" viewBox="0 0 6 5"><path d="M.5 .6 L3 3.4 L5.5 .6" fill="none" stroke="#4a4a4a" stroke-width="1.25"/></svg>
<div class="t" style="left:864.00px;top:138px;letter-spacing:0.048px;">Generate n-digit item numbers, preceded by left-justified</div>
<div class="t" style="left:863.81px;top:153px;letter-spacing:-0.008px;">zeroes, when generating production drawings </div>
<div class="t" style="left:1108.06px;top:153px;letter-spacing:-0.641px;">(HELiOS</div>
<div class="t" style="left:864.03px;top:168px;letter-spacing:0.133px;">part attribute </div>
<div class="t" style="left:936.59px;top:168px;letter-spacing:-0.681px;">COMPONENT_ITEM NUMBER)?</div>
<div class="hl" style="left:318px;top:216px;width:854px;height:1px;"></div>
<div class="t" style="left:343.15px;top:194px;letter-spacing:-0.030px;">Updating of referenced parts</div>
<div class="cb" style="left:622px;top:189px;width:235px;height:21px;"></div>
<div class="t" style="left:628.10px;top:193px;letter-spacing:0.310px;">No</div>
<svg style="left:845px;top:196.6px" width="6" height="5" viewBox="0 0 6 5"><path d="M.5 .6 L3 3.4 L5.5 .6" fill="none" stroke="#4a4a4a" stroke-width="1.25"/></svg>
<div class="t" style="left:864.00px;top:186px;letter-spacing:0.020px;">Manage up-to-dateness of BIM-managed parts in all</div>
<div class="t" style="left:864.00px;top:201px;letter-spacing:-0.287px;">models ?</div>
<div class="hl" style="left:318px;top:249px;width:854px;height:1px;"></div>
<div class="t" style="left:343.15px;top:227px;letter-spacing:-0.047px;">Use item numbers of locked parts</div>
<div class="cb" style="left:622px;top:222px;width:235px;height:21px;"></div>
<div class="t" style="left:628.10px;top:226px;letter-spacing:0.310px;">No</div>
<svg style="left:845px;top:229.6px" width="6" height="5" viewBox="0 0 6 5"><path d="M.5 .6 L3 3.4 L5.5 .6" fill="none" stroke="#4a4a4a" stroke-width="1.25"/></svg>
<div class="t" style="left:864.00px;top:219px;letter-spacing:0.017px;">Consider item numbers of locked parts for identical part</div>
<div class="t" style="left:864.00px;top:234px;letter-spacing:-0.619px;">search ?</div>
<div class="hl" style="left:318px;top:273px;width:854px;height:1px;"></div>
<div class="t" style="left:343.15px;top:255px;letter-spacing:-0.126px;">Manage general 3-D parts</div>
<div class="cb" style="left:622px;top:251px;width:235px;height:21px;"></div>
<div class="t" style="left:628.10px;top:255px;letter-spacing:0.310px;">No</div>
<svg style="left:845px;top:258.6px" width="6" height="5" viewBox="0 0 6 5"><path d="M.5 .6 L3 3.4 L5.5 .6" fill="none" stroke="#4a4a4a" stroke-width="1.25"/></svg>
<div class="t" style="left:864.00px;top:255px;letter-spacing:-0.054px;">Consider general 3-D parts for drawing management</div>
<div class="hl" style="left:318px;top:306px;width:854px;height:1px;"></div>
<div class="t" style="left:343.15px;top:284px;letter-spacing:0.091px;">Condition for &#x27;Drawing is up to date&#x27;</div>
<div class="cb" style="left:622px;top:279px;width:235px;height:21px;"></div>
<div class="t" style="left:628.10px;top:283px;letter-spacing:-0.022px;">Main parts and sub-parts, if detail drws</div>
<svg style="left:845px;top:286.6px" width="6" height="5" viewBox="0 0 6 5"><path d="M.5 .6 L3 3.4 L5.5 .6" fill="none" stroke="#4a4a4a" stroke-width="1.25"/></svg>
<div class="t" style="left:864.00px;top:276px;letter-spacing:-0.066px;">Status &#x27;Drawing is up to date&#x27; depends on derived</div>
<div class="t" style="left:864.00px;top:291px;letter-spacing:0.049px;">drawing(s).</div>
<div class="hl" style="left:318px;top:330px;width:854px;height:1px;"></div>
<div class="t" style="left:343.15px;top:312px;letter-spacing:-0.028px;">Only allow 2-level structures</div>
<div class="cb" style="left:622px;top:308px;width:235px;height:21px;"></div>
<div class="t" style="left:628.10px;top:312px;letter-spacing:0.310px;">No</div>
<svg style="left:845px;top:315.6px" width="6" height="5" viewBox="0 0 6 5"><path d="M.5 .6 L3 3.4 L5.5 .6" fill="none" stroke="#4a4a4a" stroke-width="1.25"/></svg>
<div class="t" style="left:864.00px;top:312px;letter-spacing:-0.146px;">Check before data transfer to HELiOS structure</div>
<div class="hl" style="left:318px;top:354px;width:854px;height:1px;"></div>
<div class="t" style="left:343.15px;top:336px;letter-spacing:0.043px;">Itemisation of locked parts</div>
<div class="cb" style="left:622px;top:332px;width:235px;height:21px;"></div>
<div class="t" style="left:628.10px;top:336px;letter-spacing:-0.094px;">Only manually assigned part masters</div>
<svg style="left:845px;top:339.6px" width="6" height="5" viewBox="0 0 6 5"><path d="M.5 .6 L3 3.4 L5.5 .6" fill="none" stroke="#4a4a4a" stroke-width="1.25"/></svg>
<div class="t" style="left:864.00px;top:336px;letter-spacing:0.023px;">Allow itemisation of locked parts?</div>
<div class="hl" style="left:318px;top:387px;width:854px;height:1px;"></div>
<div class="t" style="left:343.15px;top:365px;letter-spacing:-0.080px;">Output associated assembly(-ies)</div>
<div class="cb" style="left:622px;top:360px;width:235px;height:21px;"></div>
<div class="t" style="left:628.10px;top:364px;letter-spacing:0.310px;">No</div>
<svg style="left:845px;top:367.6px" width="6" height="5" viewBox="0 0 6 5"><path d="M.5 .6 L3 3.4 L5.5 .6" fill="none" stroke="#4a4a4a" stroke-width="1.25"/></svg>
<div class="t" style="left:864.00px;top:357px;letter-spacing:-0.126px;">Detect associated assembly(-ies) for individual parts? (via</div>
<div class="t" style="left:864.02px;top:372px;letter-spacing:-0.277px;">HELiOS article attribute </div>
<div class="t" style="left:988.99px;top:372px;letter-spacing:-0.743px;">&quot;COMPONENT_REFASSEMBLY&quot;)</div>
<div class="hl" style="left:318px;top:420px;width:854px;height:1px;"></div>
<div class="t" style="left:343.15px;top:398px;letter-spacing:0.084px;">Write document attributes onto article attributes</div>
<div class="t" style="left:622.05px;top:398px;letter-spacing:0.192px;">Collection</div>
<div class="btn" style="left:842px;top:393px;width:15px;height:21px;"></div>
<div class="t" style="left:845.19px;top:397px;letter-spacing:-0.438px;color:#111;font-weight:bold;">...</div>
<div class="t" style="left:864.00px;top:390px;letter-spacing:0.040px;">List of document attributes to be transferred to the</div>
<div class="t" style="left:864.00px;top:405px;letter-spacing:0.041px;">articles (Format: Document attribute;Article attribute)</div>
<div class="hl" style="left:318px;top:444px;width:854px;height:1px;"></div>
<div class="t" style="left:343.15px;top:426px;letter-spacing:-0.039px;">Clean up project when saving</div>
<div class="cb" style="left:622px;top:422px;width:235px;height:21px;"></div>
<div class="t" style="left:628.10px;top:426px;letter-spacing:-1.322px;">Yes</div>
<svg style="left:845px;top:429.6px" width="6" height="5" viewBox="0 0 6 5"><path d="M.5 .6 L3 3.4 L5.5 .6" fill="none" stroke="#4a4a4a" stroke-width="1.25"/></svg>
<div class="t" style="left:864.00px;top:426px;letter-spacing:-0.135px;">Remove invalid article masters when saving?</div>
<div class="hl" style="left:318px;top:477px;width:854px;height:1px;"></div>
<div class="t" style="left:343.15px;top:455px;letter-spacing:-0.014px;">Product structure transfer</div>
<div class="cb" style="left:622px;top:450px;width:235px;height:21px;"></div>
<div class="t" style="left:628.10px;top:454px;letter-spacing:0.041px;">Only if model drawing is valid (green)</div>
<svg style="left:845px;top:457.6px" width="6" height="5" viewBox="0 0 6 5"><path d="M.5 .6 L3 3.4 L5.5 .6" fill="none" stroke="#4a4a4a" stroke-width="1.25"/></svg>
<div class="t" style="left:864.00px;top:447px;letter-spacing:-0.004px;">When is the product structure to be transferred to</div>
<div class="t" style="left:864.00px;top:462px;letter-spacing:-0.845px;">HELiOS ?</div>
<div class="t" style="left:343.15px;top:495px;letter-spacing:-0.010px;">Transfer non-BOM-relevant construction sections</div>
<div class="cb" style="left:622px;top:491px;width:235px;height:21px;"></div>
<div class="t" style="left:628.10px;top:495px;letter-spacing:0.310px;">No</div>
<svg style="left:845px;top:498.6px" width="6" height="5" viewBox="0 0 6 5"><path d="M.5 .6 L3 3.4 L5.5 .6" fill="none" stroke="#4a4a4a" stroke-width="1.25"/></svg>
<div class="t" style="left:864.00px;top:480px;letter-spacing:-0.090px;">Transfer non-BOM-relevant structure assemblies with a</div>
<div class="t" style="left:864.00px;top:495px;letter-spacing:0.060px;">usage from the &quot;Construction section&quot; table to the</div>
<div class="t" style="left:864.00px;top:510px;letter-spacing:0.035px;">product structure ?</div>
<div class="a" style="left:318px;top:525px;width:853px;height:1px;background:#d4d4d4"></div>
<div class="a" style="left:318px;top:549px;width:19px;height:1px;background:#e4e4e4"></div>
<div class="a" style="left:314px;top:526px;width:857px;height:23px;background:linear-gradient(#efefef 0,#f5f5f5 8%,#e8e8e8 50%,#d1d1d1 100%)"></div>
<div class="t" style="left:334.05px;top:531px;letter-spacing:0.028px;">Workflow data</div>
<div class="hl" style="left:318px;top:582px;width:854px;height:1px;"></div>
<div class="t" style="left:343.15px;top:560px;letter-spacing:0.049px;">Workflow status &quot;Checkup&quot;</div>
<div class="t" style="left:622.05px;top:552px;letter-spacing:-0.029px;">Checkup</div>
<div class="t" style="left:864.00px;top:553px;letter-spacing:0.039px;">Name of workflow status for checking of parts or</div>
<div class="t" style="left:864.00px;top:568px;letter-spacing:0.216px;">documents</div>
<div class="hl" style="left:318px;top:615px;width:854px;height:1px;"></div>
<div class="t" style="left:343.15px;top:593px;letter-spacing:-0.009px;">Workflow status &quot;In progress&quot;</div>
<div class="t" style="left:622.05px;top:585px;letter-spacing:-0.190px;">In progress</div>
<div class="t" style="left:864.00px;top:585px;letter-spacing:0.009px;">Name of workflow status for processing of parts or</div>
<div class="t" style="left:864.00px;top:600px;letter-spacing:0.216px;">documents</div>
<div class="hl" style="left:318px;top:648px;width:854px;height:1px;"></div>
<div class="t" style="left:343.15px;top:626px;letter-spacing:-0.140px;">Workflow steps after release</div>
<div class="t" style="left:622.05px;top:626px;letter-spacing:0.192px;">Collection</div>
<div class="btn" style="left:842px;top:621px;width:15px;height:21px;"></div>
<div class="t" style="left:845.19px;top:625px;letter-spacing:-0.438px;color:#111;font-weight:bold;">...</div>
<div class="t" style="left:864.00px;top:618px;letter-spacing:-0.091px;">Name of the Workflow steps that exist in HELiOS after</div>
<div class="t" style="left:864.00px;top:633px;letter-spacing:-0.471px;">release</div>
<div class="hl" style="left:318px;top:672px;width:854px;height:1px;"></div>
<div class="t" style="left:343.15px;top:654px;">Update Workflow status</div>
<div class="cb" style="left:622px;top:650px;width:235px;height:21px;"></div>
<div class="t" style="left:628.10px;top:654px;letter-spacing:-0.136px;">Always</div>
<svg style="left:845px;top:657.6px" width="6" height="5" viewBox="0 0 6 5"><path d="M.5 .6 L3 3.4 L5.5 .6" fill="none" stroke="#4a4a4a" stroke-width="1.25"/></svg>
<div class="t" style="left:864.00px;top:654px;letter-spacing:-0.055px;">When is the Workflow status of the parts to be updated ?</div>
<div class="hl" style="left:318px;top:692px;width:854px;height:1px;"></div>
<div class="t" style="left:343.15px;top:676px;letter-spacing:0.166px;">With BIM</div>
<div class="a" style="left:623px;top:676px;width:13px;height:13px;border:1px solid #333;background:#fff"></div>
<div class="t" style="left:864.00px;top:676px;letter-spacing:-0.276px;">Management via HELIOS active?</div>
<div class="a" style="left:2px;top:698px;width:1171px;height:21px;background:#f1eeed"></div>
<div class="t" style="left:4.72px;top:702px;letter-spacing:0.133px;">PDM &gt; Management+BIM</div>
</body></html>
